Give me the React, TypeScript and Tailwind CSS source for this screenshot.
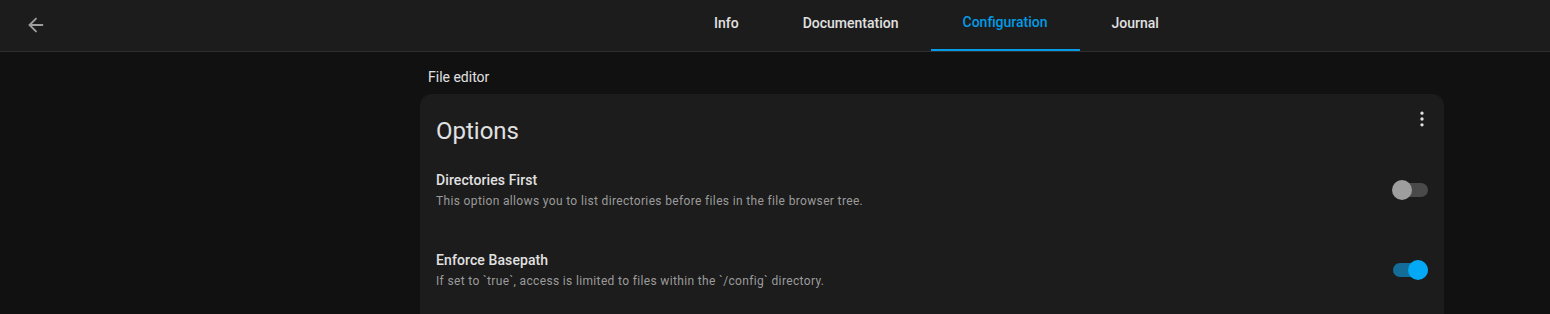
import { ArrowLeft, EllipsisVertical } from "lucide-react";

const tabs = ["Info", "Documentation", "Configuration", "Journal"];

function Toggle({ on }: { on: boolean }) {
  return (
    <div className="relative h-5 w-9 shrink-0">
      <div
        className={
          "absolute left-[1px] top-[3px] h-[14px] w-[35px] rounded-full " +
          (on ? "bg-[#136d98]" : "bg-[#4a4a4a]")
        }
      />
      <div
        className={
          "absolute top-0 h-5 w-5 rounded-full " +
          (on ? "left-[16px] bg-[#03a9f4]" : "left-0 bg-[#9e9e9e]")
        }
      />
    </div>
  );
}

function OptionRow({ title, desc, on }: { title: string; desc: string; on: boolean }) {
  return (
    <div className="flex h-20 items-center justify-between pl-4 pr-4 pt-[2px]">
      <div className="mb-[2px] flex flex-col">
        <div className="text-[14px] font-medium leading-5 tracking-[0.1px] text-[#e1e1e1]">
          {title}
        </div>
        <div className="mt-[3px] text-[12px] leading-4 tracking-[0.35px] text-[#9b9b9b]">
          {desc}
        </div>
      </div>
      <Toggle on={on} />
    </div>
  );
}

export default function App() {
  return (
    <div className="min-h-[314px] bg-[#111111] font-['Roboto',sans-serif] text-[#e1e1e1]">
      <header className="flex h-[52px] items-start border-b border-[#2f2f2f] bg-[#1c1c1c]">
        <button className="ml-[20px] mt-[9px] flex h-[32px] w-[32px] items-center justify-center text-[#9e9e9e]">
          <ArrowLeft size={22} strokeWidth={2} />
        </button>
        <nav className="ml-[630px] flex h-[51px]">
          {tabs.map((t) => {
            const active = t === "Configuration";
            return (
              <div
                key={t}
                className={
                  "relative flex h-full items-center px-8 pb-[5px] text-[14px] font-medium " +
                  (active ? "text-[#039be5]" : "text-[#e1e1e1]")
                }
              >
                <span className={active ? "-mt-[2px]" : ""}>{t}</span>
                {active && (
                  <div className="absolute bottom-0 left-0 right-0 h-[2px] bg-[#039be5]" />
                )}
              </div>
            );
          })}
        </nav>
      </header>
      <main className="ml-[420px] w-[1024px]">
        <div className="ml-2 pt-[15px] pb-[7px] text-[14px] leading-5 text-[#e1e1e1]">
          File editor
        </div>
        <section className="rounded-t-xl bg-[#1c1c1c] pb-4">
          <div className="flex items-start justify-between pl-4 pr-3 pt-[21px]">
            <h1 className="text-[24px] leading-8 text-[#e1e1e1]">Options</h1>
            <EllipsisVertical size={20} className="mt-[-6px] text-[#e1e1e1]" />
          </div>
          <div className="mt-[2px]">
            <OptionRow
              title="Directories First"
              desc="This option allows you to list directories before files in the file browser tree."
              on={false}
            />
            <OptionRow
              title="Enforce Basepath"
              desc="If set to `true`, access is limited to files within the `/config` directory."
              on={true}
            />
          </div>
        </section>
      </main>
    </div>
  );
}
